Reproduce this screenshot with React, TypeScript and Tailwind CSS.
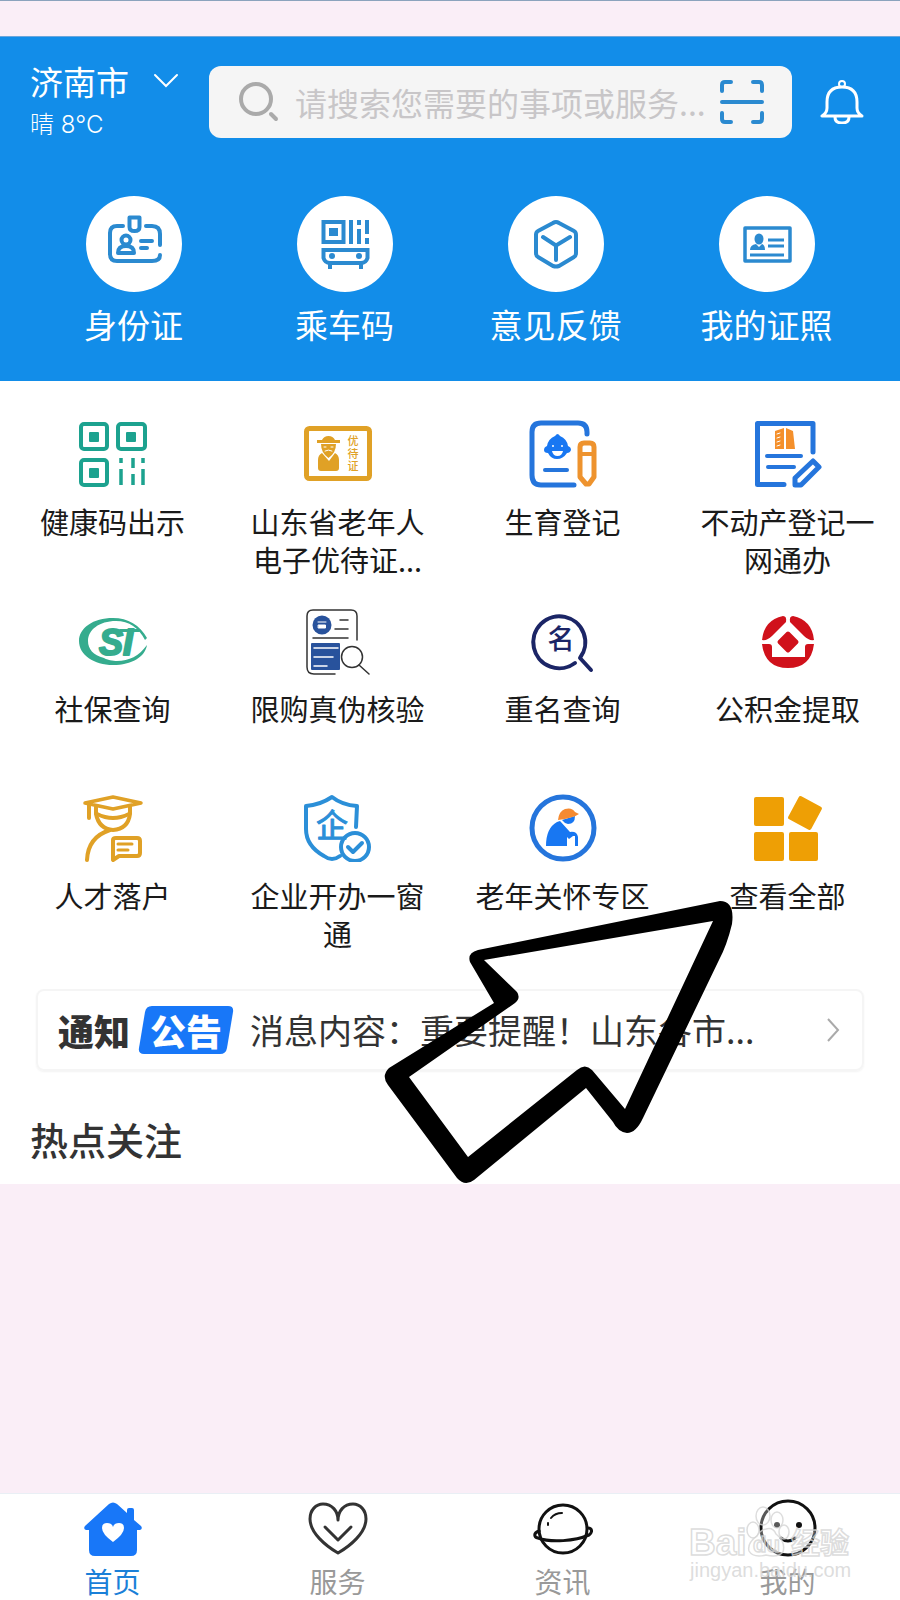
import type { ReactNode } from "react";

interface Entry {
  label: string;
  icon: ReactNode;
}

const BLUE = "#2b8ad0";
const GREEN = "#1ca28f";
const GOLD = "#e0a126";
const ROYAL = "#2575dc";
const CJK = "'Noto Sans CJK SC', sans-serif";

function QuickIcon({ children }: { children: ReactNode }) {
  return (
    <svg viewBox="0 0 96 96" className="size-24 rounded-full bg-white" fill="none" stroke={BLUE} strokeWidth="4" strokeLinecap="round" strokeLinejoin="round">
      {children}
    </svg>
  );
}

function ServiceIcon({ children }: { children: ReactNode }) {
  return (
    <svg viewBox="0 0 68 68" className="size-[68px]" fill="none" strokeLinecap="round" strokeLinejoin="round">
      {children}
    </svg>
  );
}

const quickEntries: Entry[] = [
  {
    label: "身份证",
    icon: (
      <QuickIcon>
        <path d="M37 30H31Q24 30 24 37V58Q24 65 31 65H66Q74 65 74 59M74 49V38Q74 30 66 30H60" />
        <path d="M43.500 21.500H53.500V31Q53.500 35 48.500 35Q43.500 35 43.500 31Z" strokeWidth="4" />
        <circle cx="40" cy="44" r="4.500" strokeWidth="4" />
        <path d="M32 57Q32 50 40 50Q48 50 48 57Z" strokeWidth="4" />
        <path d="M55 45H66M55 52H61" />
      </QuickIcon>
    ),
  },
  {
    label: "乘车码",
    icon: (
      <QuickIcon>
        <g strokeLinecap="butt" strokeLinejoin="miter">
          <rect x="26.500" y="26" width="20" height="20" strokeWidth="4" />
          <rect x="32" y="32" width="9" height="8" fill={BLUE} stroke="none" />
          <path d="M54 24V48M62 24V29M62 33V48M70 24V38M70 42V48" strokeWidth="4" />
          <path d="M26.500 54H70.500V62Q69 67 64 67H33Q28 67 26.500 62Z" strokeWidth="4" />
          <path d="M33 67V73M64 67V73" strokeWidth="4" />
        </g>
        <circle cx="35" cy="60" r="3" fill={BLUE} stroke="none" />
        <circle cx="62" cy="60" r="3" fill={BLUE} stroke="none" />
      </QuickIcon>
    ),
  },
  {
    label: "意见反馈",
    icon: (
      <QuickIcon>
        <path d="M45 27Q48 25 51 27L66 35Q68 36 68 39V57Q68 60 66 61L51 70Q48 71 45 70L30 61Q28 60 28 57V39Q28 36 30 35Z" />
        <path d="M35 41L48 49.500L62 41M48 49.500V64" />
      </QuickIcon>
    ),
  },
  {
    label: "我的证照",
    icon: (
      <QuickIcon>
        <rect x="26" y="32" width="45" height="33" strokeWidth="3.500" />
        <ellipse cx="40" cy="43" rx="4.500" ry="5.500" fill={BLUE} stroke="none" />
        <path d="M31 54Q31 49 37 48L40 51L43 48Q46 49 46 54Z" fill={BLUE} stroke="none" />
        <path d="M49 44H65M49 50H65M31 59H65" strokeWidth="3" strokeLinecap="butt" />
      </QuickIcon>
    ),
  },
];

const services: Entry[] = [
  {
    label: "健康码出示",
    icon: (
      <ServiceIcon>
        <g stroke={GREEN} strokeWidth="4">
          <rect x="2" y="4" width="26" height="25" rx="3" />
          <rect x="39" y="4" width="27" height="25" rx="3" />
          <rect x="2" y="40" width="26" height="25" rx="3" />
        </g>
        <path d="M42 38V43M42 49V65M54 38V48M54 54V65M64 38V43M64 49V65" stroke={GREEN} strokeWidth="3.500" strokeLinecap="butt" />
        <g fill={GREEN}>
          <rect x="10" y="12" width="10" height="10" rx="1" />
          <rect x="47" y="12" width="10" height="10" rx="1" />
          <rect x="10" y="48" width="10" height="10" rx="1" />
        </g>
      </ServiceIcon>
    ),
  },
  {
    label: "山东省老年人电子优待证...",
    icon: (
      <ServiceIcon>
        <rect x="2.500" y="8.500" width="63" height="50" rx="3" stroke={GOLD} strokeWidth="5" />
        <g fill={GOLD}>
          <path d="M13 20H18Q20 16 24.500 16Q29 16 31 20H36V23H13Z" />
          <path d="M17 24H32Q32 33 24.500 38Q17 33 17 24Z" />
          <path d="M18 33Q14 35 14 40V48Q14 51 17 51H32Q35 51 35 48V40Q35 35 31 33L25 41Z" />
        </g>
        <path d="M20 27H22M27 27H29M21 31Q24.500 29 28 31" stroke="white" strokeWidth="1" />
        <g fill={GOLD} fontFamily={CJK} fontSize="11" fontWeight="500" textAnchor="middle">
          <text x="49" y="25">优</text>
          <text x="49" y="38">待</text>
          <text x="49" y="50">证</text>
        </g>
      </ServiceIcon>
    ),
  },
  {
    label: "生育登记",
    icon: (
      <ServiceIcon>
        <path d="M58 14V12Q58 3 49 3H12Q3 3 3 12V55Q3 65 12 65H45" stroke={ROYAL} strokeWidth="5" />
        <path d="M16 50H38" stroke={ROYAL} strokeWidth="4" />
        <path d="M28 14Q30 14 31 16Q38 19 39 26Q42 27 42 30Q41 33 38 33Q34 39 28 39Q22 39 19 33Q15 33 15 30Q15 27 18 26Q19 19 26 16Z" fill="#1877f2" />
        <circle cx="24" cy="26" r="1" fill="white" />
        <circle cx="33" cy="26" r="1" fill="white" />
        <path d="M23 31H34Q33 36 28.500 36Q24 36 23 31Z" fill="white" />
        <g stroke="#ee932e" strokeWidth="5">
          <path d="M51 27Q51 23 55 23H61Q65 23 65 27V57L60 64H57L51 57Z" />
          <path d="M51 34H65" strokeWidth="4" />
        </g>
      </ServiceIcon>
    ),
  },
  {
    label: "不动产登记一网通办",
    icon: (
      <ServiceIcon>
        <g stroke={ROYAL} strokeWidth="5">
          <path d="M59 32V3.500H3.500V64.500H30" />
          <path d="M13 36H47M14 47H40" strokeWidth="4" />
          <path d="M41 58L59 41L65 47L47 65H41Z" />
        </g>
        <path d="M21 29V11L30 8V29ZM32 8L39 11L41 29H32Z" fill="#f4902c" />
        <path d="M23 14L26 13M23 18L26 17M23 22L26 21M23 26L26 25" stroke="white" strokeWidth="1" />
      </ServiceIcon>
    ),
  },
  {
    label: "社保查询",
    icon: (
      <ServiceIcon>
        <path
          d="M68 31C61 18 49 11 34 11C14 11 0 21 0 34C0 48 15 58 34 58C53 58 66 50 68 38C60 49 50 54 38 54C34 54 28 53 25 51C14 48 9 42 9 34C9 23 20 14 37 14C50 14 60 21 66 33Z"
          fill="#35ac8e"
        />
        <text x="37" y="48" fill="#35ac8e" stroke="#35ac8e" strokeWidth="2" fontFamily="'Liberation Sans', sans-serif" fontSize="36" fontWeight="700" fontStyle="italic" textAnchor="middle">
          SI
        </text>
        <path d="M40 22H60L61 25H42Z" fill="#35ac8e" />
      </ServiceIcon>
    ),
  },
  {
    label: "限购真伪核验",
    icon: (
      <ServiceIcon>
        <path d="M53 33V9Q53 3 47 3H9Q3 3 3 9V60Q3 67 10 67H31" stroke="#333" strokeWidth="1.500" />
        <path d="M36 13H44M31 22H44M9 31H44" stroke="#333" strokeWidth="1.500" />
        <circle cx="18" cy="18" r="9.500" fill="#28529c" />
        <path d="M14 15H22M14.500 18H21.500V21H14.500Z" stroke="white" strokeWidth="1" fill="white" />
        <rect x="7" y="36" width="29" height="27" rx="1" fill="#28529c" />
        <path d="M10 41H34M10 50H29M10 59H23" stroke="white" strokeWidth="1.500" />
        <circle cx="48" cy="50" r="10.500" stroke="#333" strokeWidth="1.500" />
        <path d="M55 58L65 67" stroke="#333" strokeWidth="1.500" />
      </ServiceIcon>
    ),
  },
  {
    label: "重名查询",
    icon: (
      <ServiceIcon>
        <path d="M46 56A26 26 0 1 1 51 51L62 63" stroke="#1b2566" strokeWidth="4" />
        <text x="32" y="42" fill="#1b2566" fontFamily={CJK} fontSize="27" fontWeight="500" textAnchor="middle">
          名
        </text>
      </ServiceIcon>
    ),
  },
  {
    label: "公积金提取",
    icon: (
      <ServiceIcon>
        <g fill="#d0111b">
          <path d="M29 9Q33 9 32 15L18 29Q13 34 8 33Q10 13 29 9Z" />
          <path d="M39 9Q35 9 36 15L50 29Q55 34 60 33Q58 13 39 9Z" />
          <path d="M8 37H15Q18 37 18 40V50H51V40Q51 37 54 37H60Q57 61 34 61Q11 61 8 37Z" />
          <rect x="26" y="27" width="16" height="16" rx="2" transform="rotate(45 34 35)" />
        </g>
      </ServiceIcon>
    ),
  },
  {
    label: "人才落户",
    icon: (
      <ServiceIcon>
        <g stroke={GOLD} strokeWidth="4">
          <path d="M6 9L34 3L62 9L34 15Z" strokeWidth="3.500" />
          <path d="M10 10V24" />
          <path d="M17 13V20Q20 35 34 36Q49 35 51 20V13" />
          <path d="M18 20Q34 28 50 20" />
          <path d="M31 36Q9 43 8 66" />
          <path d="M34 66V46Q34 44 37 44H58Q61 44 61 47V59Q61 62 58 62H40Z" />
          <path d="M39 50H53M39 56H49" strokeWidth="3" />
        </g>
      </ServiceIcon>
    ),
  },
  {
    label: "企业开办一窗通",
    icon: (
      <ServiceIcon>
        <g stroke="#2b8fd8" strokeWidth="4">
          <path d="M52 33L53 12Q38 11 28 3Q16 11 2 12V35Q2 52 20 62Q28 68 36 62" />
          <circle cx="51" cy="53" r="14" />
          <path d="M44 53L49 58L58 49" />
        </g>
        <text x="28" y="43" fill="#2b8fd8" stroke="#2b8fd8" strokeWidth="1" fontFamily={CJK} fontSize="32" textAnchor="middle">
          企
        </text>
      </ServiceIcon>
    ),
  },
  {
    label: "老年关怀专区",
    icon: (
      <ServiceIcon>
        <circle cx="34" cy="34" r="31" stroke={ROYAL} strokeWidth="5" />
        <path d="M17 52Q17 34 28 28L31 27L41 38Q48 37 49 43V52H46V42H44L40 45L38 43V52Z" fill="#1877f2" />
        <path d="M33 26L46 22Q46 30 39 30Q35 29 33 26Z" fill="#1877f2" />
        <path d="M29 26Q30 17 36 15Q43 13 46 18L50 20Q44 24 29 26Z" fill="#f58a30" />
      </ServiceIcon>
    ),
  },
  {
    label: "查看全部",
    icon: (
      <ServiceIcon>
        <g fill="#ee9f05">
          <rect x="0" y="3" width="30" height="29" rx="2" />
          <rect x="0" y="38" width="30" height="29" rx="2" />
          <rect x="35" y="38" width="29" height="29" rx="2" />
          <rect x="38" y="6" width="26" height="26" rx="2" transform="rotate(28 51 19)" />
        </g>
      </ServiceIcon>
    ),
  },
];

const tabs: Entry[] = [
  {
    label: "首页",
    icon: (
      <>
        <path
          d="M26 6Q30 3 34 6L44 15V12Q44 10 46 10H49Q51 10 51 12V22L58 28Q60 31 57 32H54V52Q54 58 48 58H12Q6 58 6 52V32H3Q0 31 2 28Z"
          fill="#1877f8"
        />
        <path d="M30 44Q19 36 19 30Q19 25 24 25Q29 25 30 29Q31 25 36 25Q41 25 41 30Q41 36 30 44Z" fill="white" />
      </>
    ),
  },
  {
    label: "服务",
    icon: (
      <g stroke="#333" strokeWidth="3" fill="none" strokeLinecap="round" strokeLinejoin="round">
        <path d="M30 55C18 48 2 35 2 21C2 12 8 6 15 6C24 6 30 13 30 22C30 13 36 6 45 6C52 6 58 12 58 21C58 35 42 48 30 55Z" />
        <path d="M17 29L30 42L43 29" />
      </g>
    ),
  },
  {
    label: "资讯",
    icon: (
      <g stroke="#111" strokeWidth="3" fill="none" strokeLinecap="round">
        <circle cx="30" cy="31" r="24" />
        <path d="M6 33C0 35 1 39 5 40C18 45 42 43 56 37C60 34 59 30 55 30" />
        <path d="M15 27V25M18 20Q22 15 29 15" strokeWidth="2" />
      </g>
    ),
  },
  {
    label: "我的",
    icon: (
      <g>
        <circle cx="30" cy="30" r="27" stroke="#111" strokeWidth="3" fill="none" />
        <circle cx="19" cy="27" r="3" fill="#111" />
        <circle cx="41" cy="27" r="3" fill="#111" />
        <path d="M23 40Q30 46 37 40" stroke="#111" strokeWidth="3" fill="none" strokeLinecap="round" />
      </g>
    ),
  },
];

function Header() {
  return (
    <header className="bg-[#128de9] pt-6 pb-[37px] text-white">
      <div className="flex items-center pr-9 pl-[30px]">
        <button type="button" className="w-[179px] text-left">
          <span className="flex items-center gap-6 text-[33px] leading-10">
            济南市
            <svg viewBox="0 0 26 16" className="h-4 w-[26px]" fill="none" stroke="currentColor" strokeWidth="2" strokeLinecap="round">
              <path d="M2 2L13 13L24 2" />
            </svg>
          </span>
          <span className="mt-1.5 block font-[Inter,'Noto_Sans_CJK_SC',sans-serif] text-[24px] leading-9 font-light">晴 8°C</span>
        </button>
        <form className="flex h-[72px] min-w-0 flex-1 items-center rounded-xl bg-[#f5f5f5] pr-7 pl-[30px]">
          <svg viewBox="0 0 40 40" className="size-10 shrink-0" fill="none" stroke="#aaa" strokeWidth="4" strokeLinecap="round">
            <circle cx="17" cy="17" r="15" />
            <path d="M32 32L37 37" />
          </svg>
          <input
            type="text"
            aria-label="搜索"
            placeholder="请搜索您需要的事项或服务..."
            className="ml-4 min-w-0 flex-1 bg-transparent text-[32px] leading-10 outline-none placeholder:text-[#c8c6c8]"
          />
          <button type="button" aria-label="扫一扫" className="shrink-0">
            <svg viewBox="0 0 44 44" className="size-11" fill="none" stroke={BLUE} strokeWidth="4" strokeLinecap="round" strokeLinejoin="round">
              <path d="M2 11V5Q2 2 5 2H11M33 2H39Q42 2 42 5V11M42 33V39Q42 42 39 42H33M11 42H5Q2 42 2 39V33M2 22H42" />
            </svg>
          </button>
        </form>
        <button type="button" aria-label="消息" className="ml-7">
          <svg viewBox="0 0 44 44" className="size-11" fill="none" stroke="currentColor" strokeWidth="3" strokeLinecap="round" strokeLinejoin="round">
            <circle cx="22" cy="4" r="3" strokeWidth="2" />
            <path d="M2 36H42Q37 33 37 28V22Q37 7 22 7Q7 7 7 22V28Q7 33 2 36Z" />
            <path d="M15 37Q15 43 22 43Q29 43 29 37" />
          </svg>
        </button>
      </div>
      <div className="mt-[53px] grid grid-cols-4 px-7">
        {quickEntries.map((entry) => (
          <button key={entry.label} type="button" className="flex flex-col items-center">
            {entry.icon}
            <span className="mt-3 text-[33px] leading-10">{entry.label}</span>
          </button>
        ))}
      </div>
    </header>
  );
}

function Notice() {
  return (
    <a href="#notice" className="mx-9 mt-2 flex h-[82px] items-center rounded-lg border-2 border-[#f5f5f5] pr-[22px] pl-5 shadow-xs">
      <span className="text-[36px] leading-10 font-black text-[#333]">通知</span>
      <span className="relative ml-2 flex h-12 w-24 items-center justify-center">
        <svg viewBox="0 0 96 48" className="absolute inset-0 h-12 w-24" fill="#1877f8">
          <path d="M14 0H90Q96 0 95 6L89 42Q88 48 82 48H6Q0 48 1 42L7 6Q8 0 14 0Z" />
        </svg>
        <span className="relative text-[36px] leading-10 font-black text-white">公告</span>
      </span>
      <span className="ml-4 min-w-0 flex-1 truncate text-[34px] leading-12 text-[#333]">消息内容：重要提醒！山东各市...</span>
      <svg viewBox="0 0 14 26" className="h-[26px] w-[14px]" fill="none" stroke="#aaa" strokeWidth="2">
        <path d="M2 2L12 13L2 24" />
      </svg>
    </a>
  );
}

function Watermark() {
  return (
    <svg viewBox="0 0 170 96" className="pointer-events-none absolute right-[44px] bottom-2 h-24 w-[170px]" fontFamily="'Liberation Sans', 'Noto Sans CJK SC', sans-serif">
      <g fill="white" fillOpacity="0.3" stroke="#d4d4d4" strokeOpacity="0.8" strokeWidth="1.500">
        <text x="3" y="59" fontSize="37" fontWeight="700">Bai</text>
        <ellipse cx="67" cy="34" rx="6" ry="8" />
        <ellipse cx="77" cy="20" rx="7" ry="9" />
        <ellipse cx="91" cy="24" rx="6" ry="8" />
        <ellipse cx="98" cy="36" rx="5" ry="7" />
        <path d="M80 33Q87 31 90 38Q100 46 97 56Q92 62 80 59Q67 62 63 55Q61 47 71 40Q74 34 80 33Z" />
        <text x="67" y="56" fontSize="22" fontWeight="700">du</text>
        <text x="105" y="58" fontSize="29" fontWeight="700">经验</text>
      </g>
      <text x="4" y="81" fontSize="20" fill="#d4d4d4" fillOpacity="0.8">jingyan.baidu.com</text>
    </svg>
  );
}

function TabBar() {
  return (
    <nav className="relative grid grid-cols-4 border-t border-[#e9eff5] bg-white pt-1">
      {tabs.map((tab, index) => (
        <a key={tab.label} href={`#tab-${index}`} className="flex flex-col items-center">
          <svg viewBox="0 0 60 60" className="size-[60px]">
            {tab.icon}
          </svg>
          <span className={`mt-1 text-[28px] leading-[38px] ${index === 0 ? "text-[#1a80d8]" : "text-[#999]"}`}>{tab.label}</span>
        </a>
      ))}
      <Watermark />
    </nav>
  );
}

// Hand-drawn arrow pointing at 查看全部
function Arrow() {
  return (
    <svg viewBox="380 895 360 295" className="pointer-events-none absolute top-[895px] left-[380px] h-[295px] w-[360px]">
      <path
        fillRule="evenodd"
        d="M720 901Q735 901 732 924Q727 945 719 960L643 1118Q636 1133 627 1133Q618 1132 613 1122L586 1088L474 1180Q465 1187 457 1178L388 1085Q381 1076 389 1068L494 1003L470 962Q467 953 478 950ZM713 921L484 960L517 992Q521 998 515 1003L409 1077L468 1157L577 1070Q585 1063 592 1070L625 1109Z"
      />
    </svg>
  );
}

export default function App() {
  return (
    <div className="relative flex min-h-screen flex-col bg-[#faeef7] font-['Noto_Sans_CJK_SC',sans-serif]">
      <div className="h-[37px] border-t border-b border-t-[#8ba3bd] border-b-[#6aa6dc]" />
      <Header />
      <main className="bg-white pb-[21px]">
        <div className="grid grid-cols-4 pt-[39px]">
          {services.map((service) => (
            <button key={service.label} type="button" className="flex min-h-[187px] flex-col items-center px-6">
              {service.icon}
              <span className="mt-[14px] text-[29px] leading-[38px] text-[#1a1a1a]">{service.label}</span>
            </button>
          ))}
        </div>
        <Notice />
        <h2 className="mt-11 px-[30px] text-[38px] leading-12 font-medium text-[#333]">热点关注</h2>
      </main>
      <div className="flex-1" />
      <TabBar />
      <Arrow />
    </div>
  );
}
